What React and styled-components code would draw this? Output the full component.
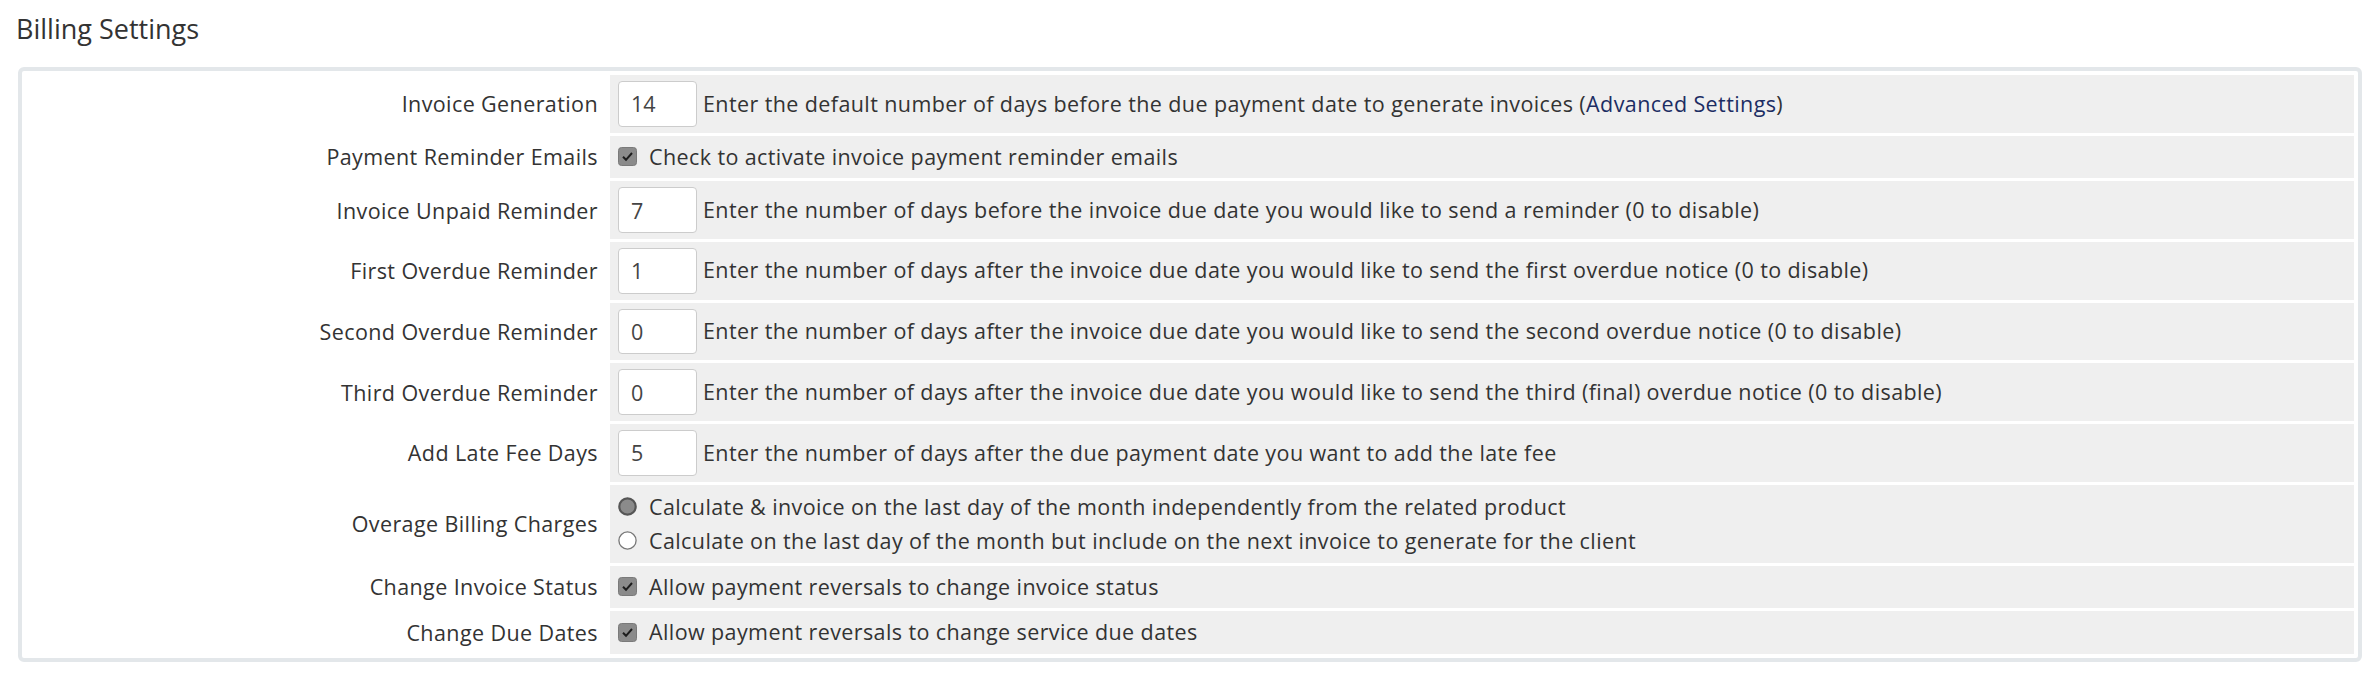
import React from "react";
import styled, { createGlobalStyle } from "styled-components";

const GlobalStyle = createGlobalStyle`
  body {
    margin: 0;
    background: #fff;
    font-family: "Open Sans", "Liberation Sans", sans-serif;
    color: #333;
  }
`;

const Page = styled.div`
  padding: 0 14px 0 16px;
`;

const Title = styled.h2`
  margin: 10px 0 20px;
  font-size: 27px;
  font-weight: 400;
  line-height: normal;
  color: #333;
`;

const Box = styled.div`
  margin-left: 2px;
  border: 4px solid #e3e7ea;
  border-radius: 6px;
  padding: 4px;
  display: flex;
  flex-direction: column;
  gap: 3px;
`;

const Row = styled.div`
  display: grid;
  grid-template-columns: 581px 1fr;
  column-gap: 3px;
`;

const Label = styled.div`
  display: flex;
  align-items: center;
  justify-content: flex-end;
  padding-right: 9px;
  font-size: 21.5px;
  letter-spacing: 0.4px;
  color: #333;
`;

const Field = styled.div`
  display: flex;
  flex-direction: ${(p) => (p.$stack ? "column" : "row")};
  align-items: ${(p) => (p.$stack ? "flex-start" : "center")};
  background: #efefef;
  padding: ${(p) => (p.$stack ? "5px 8px" : "6px 8px")};
  font-size: 21.5px;
  letter-spacing: 0.4px;
  line-height: 30.5px;
  color: #333;
`;

const NumberInput = styled.input`
  box-sizing: border-box;
  width: 79px;
  height: 45.7px;
  border: 1px solid #ccc;
  border-radius: 4px;
  background: #fff;
  padding: 0 12px;
  font-family: inherit;
  font-size: 21.5px;
  color: #444;
  margin-right: 6px;
  outline: none;
`;

const Option = styled.label`
  display: flex;
  align-items: center;
  gap: 12px;
  line-height: ${(p) => (p.$tall ? "34px" : "30.5px")};
`;

const Link = styled.a`
  color: #1c2d63;
  text-decoration: none;
`;

const Check = () => (
  <svg width="19" height="19" viewBox="0 0 19 19">
    <rect x="0.5" y="0.5" width="18" height="18" rx="3" fill="#8b8b8b" stroke="#7a7a7a" />
    <path d="M5 9.8 L8 12.8 L14 6" fill="none" stroke="#1d1d1d" strokeWidth="2" />
  </svg>
);

const Radio = ({ on }) => (
  <svg width="19" height="19" viewBox="0 0 19 19">
    {on ? (
      <circle cx="9.5" cy="9.5" r="8.2" fill="#8b8b8b" stroke="#565656" strokeWidth="2.2" />
    ) : (
      <circle cx="9.5" cy="9.5" r="8.6" fill="#fff" stroke="#777" strokeWidth="1.3" />
    )}
  </svg>
);

const inputRows = [
  ["Invoice Unpaid Reminder", "7", "Enter the number of days before the invoice due date you would like to send a reminder (0 to disable)"],
  ["First Overdue Reminder", "1", "Enter the number of days after the invoice due date you would like to send the first overdue notice (0 to disable)"],
  ["Second Overdue Reminder", "0", "Enter the number of days after the invoice due date you would like to send the second overdue notice (0 to disable)"],
  ["Third Overdue Reminder", "0", "Enter the number of days after the invoice due date you would like to send the third (final) overdue notice (0 to disable)"],
  ["Add Late Fee Days", "5", "Enter the number of days after the due payment date you want to add the late fee"],
];

export default function App() {
  return (
    <Page>
      <GlobalStyle />
      <Title>Billing Settings</Title>
      <Box>
        <Row>
          <Label>Invoice Generation</Label>
          <Field>
            <NumberInput defaultValue="14" />
            <span>
              Enter the default number of days before the due payment date to generate invoices (
              <Link href="#">Advanced Settings</Link>)
            </span>
          </Field>
        </Row>
        <Row>
          <Label>Payment Reminder Emails</Label>
          <Field>
            <Option>
              <Check />
              Check to activate invoice payment reminder emails
            </Option>
          </Field>
        </Row>
        {inputRows.map(([label, value, help]) => (
          <Row key={label}>
            <Label>{label}</Label>
            <Field>
              <NumberInput defaultValue={value} />
              <span>{help}</span>
            </Field>
          </Row>
        ))}
        <Row>
          <Label>Overage Billing Charges</Label>
          <Field $stack>
            <Option $tall>
              <Radio on />
              Calculate &amp; invoice on the last day of the month independently from the related product
            </Option>
            <Option $tall>
              <Radio />
              Calculate on the last day of the month but include on the next invoice to generate for the client
            </Option>
          </Field>
        </Row>
        <Row>
          <Label>Change Invoice Status</Label>
          <Field>
            <Option>
              <Check />
              Allow payment reversals to change invoice status
            </Option>
          </Field>
        </Row>
        <Row>
          <Label>Change Due Dates</Label>
          <Field>
            <Option>
              <Check />
              Allow payment reversals to change service due dates
            </Option>
          </Field>
        </Row>
      </Box>
    </Page>
  );
}
